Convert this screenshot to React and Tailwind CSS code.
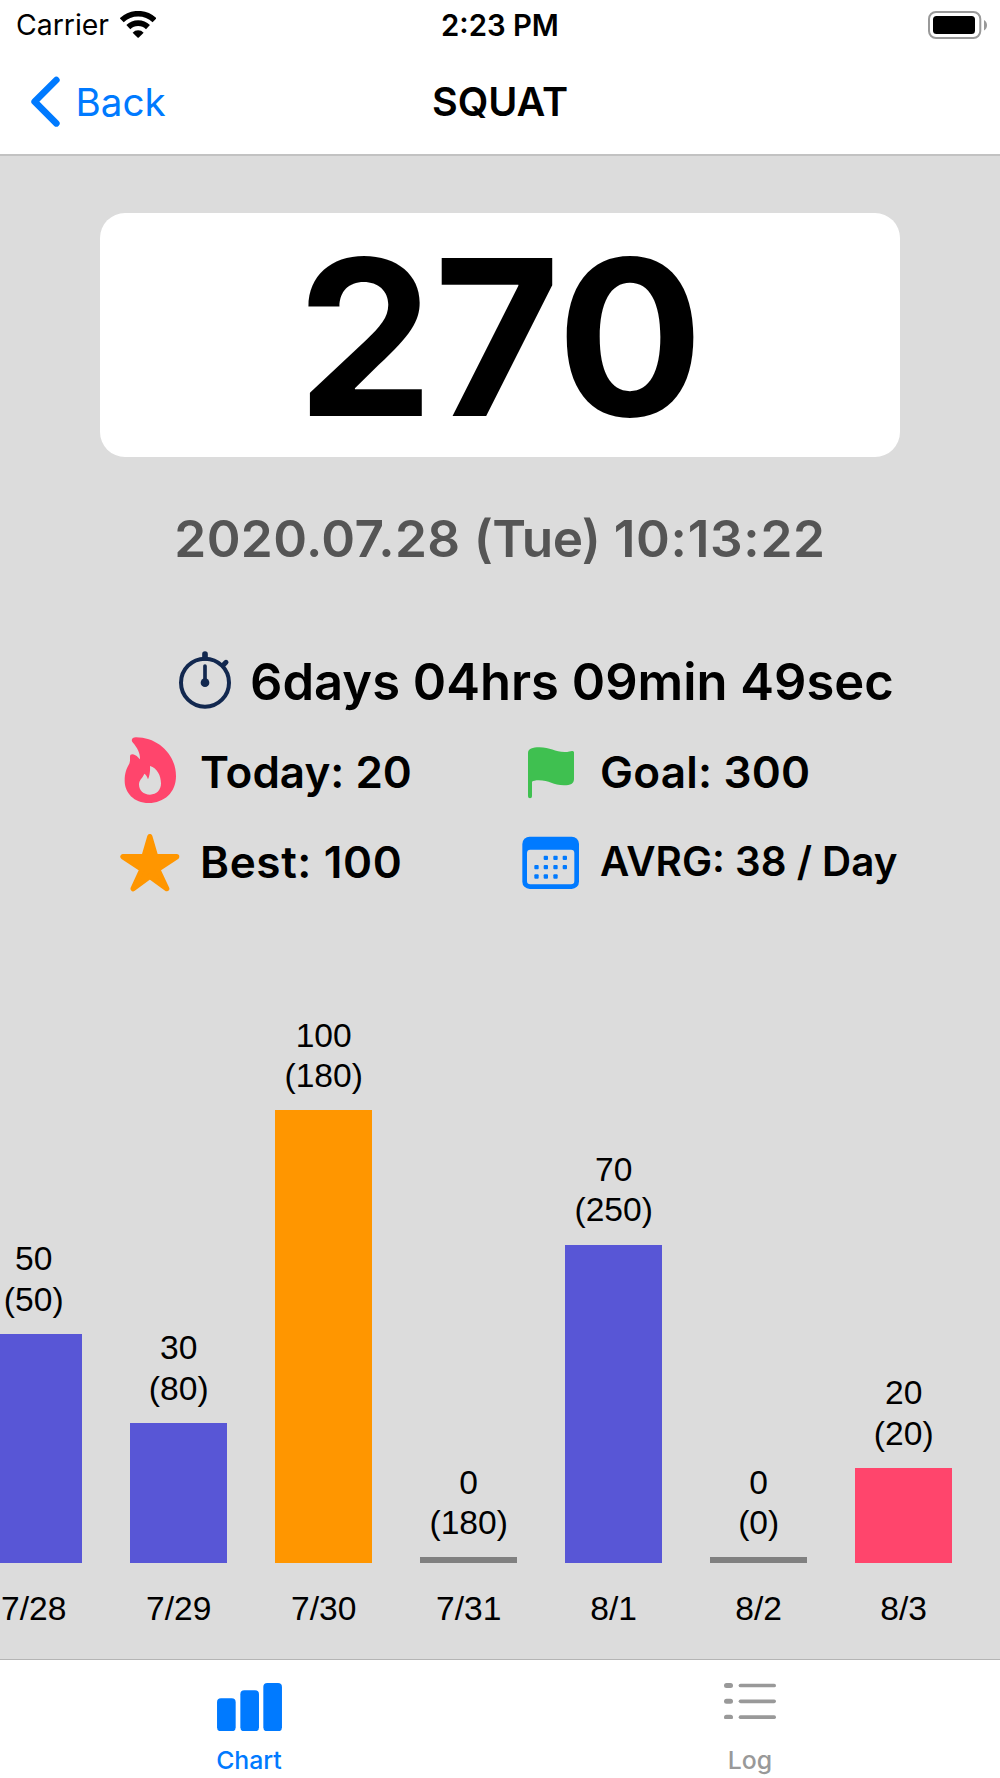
import React from "react";

const days = [
  { date: "7/28", count: 50, total: 50, color: "bg-[#5856d6]" },
  { date: "7/29", count: 30, total: 80, color: "bg-[#5856d6]" },
  { date: "7/30", count: 100, total: 180, color: "bg-[#ff9600]" },
  { date: "7/31", count: 0, total: 180, color: "bg-[#808080]" },
  { date: "8/1", count: 70, total: 250, color: "bg-[#5856d6]" },
  { date: "8/2", count: 0, total: 0, color: "bg-[#808080]" },
  { date: "8/3", count: 20, total: 20, color: "bg-[#ff456c]" },
];

// Even an empty day keeps a thin line
const barHeight = (count) => 5.7 + count * 4.47;

const WifiIcon = () => (
  <svg className="w-[36.3px] h-[27px]" viewBox="0 0 109 81" fill="none">
    <path d="M5.2 28A71 71 0 0 1 103.8 28" stroke="#000" strokeWidth="17" />
    <path d="M25 48.4A42.5 42.5 0 0 1 84 48.4" stroke="#000" strokeWidth="17" />
    <path d="M38 65A23 23 0 0 1 71 65L56.5 79.5Q54.5 81 52.5 79.5Z" fill="#000" />
  </svg>
);

const BatteryIcon = () => (
  <svg className="w-[60px] h-[28px]" viewBox="0 0 60 28">
    <rect x="1" y="1" width="51.3" height="26" rx="7" fill="#fff" stroke="#999" strokeWidth="2" />
    <rect x="5" y="5" width="42" height="18" rx="3.5" fill="#000" />
    <path d="M56 9C60 11 60 17.500 56 19.500Z" fill="#999" />
  </svg>
);

const ChevronIcon = () => (
  <svg className="w-[30px] h-[51px]" viewBox="0 0 90 153" fill="none">
    <path d="M79 12L14 77L79 142" stroke="#007aff" strokeWidth="20" strokeLinecap="round" strokeLinejoin="round" />
  </svg>
);

const StopwatchIcon = () => (
  <svg className="w-[54px] h-[64px]" viewBox="234 60 162 192" fill="none" stroke="#12284f" strokeLinecap="round">
    <circle cx="315" cy="158" r="72" strokeWidth="12" />
    <path d="M315 72V84" strokeWidth="17" />
    <path d="M378 97L370 105" strokeWidth="15" />
    <path d="M315 108V156" strokeWidth="11" />
    <circle cx="315" cy="158" r="13" fill="#12284f" stroke="none" />
  </svg>
);

const FlameIcon = () => (
  <svg className="w-[56px] h-[69.33px]" viewBox="66 321 168 208">
    <path
      fill="#ff456c"
      fillRule="evenodd"
      d="M108 322C175 322 228 375 228 438C228 488 192 519 146 519C102 519 74 488 74 452C74 430 79 417 87 403C91 395 90 388 90 380C90 372 98 371 106 376C112 379 116 384 120 388C121 370 112 353 99 338C91 330 97 322 108 322ZM150 408C172 415 183 437 183 460C183 480 170 494 150 494C130 494 117 481 117 463C117 450 128 444 133 431C139 434 141 440 144 448C149 437 151 423 150 408Z"
    />
  </svg>
);

const StarIcon = () => (
  <svg className="w-[64px] h-[60px]" viewBox="54 606 192 180">
    <path
      fill="#ff9600"
      stroke="#ff9600"
      strokeWidth="16"
      strokeLinejoin="round"
      d="M149.500 620L167 680H230L173 718L200 776L149.500 739L99.500 776L126 718L69 680H132Z"
    />
  </svg>
);

const FlagIcon = () => (
  <svg className="w-[50px] h-[54px]" viewBox="75 344 150 162">
    <path
      fill="#3fc050"
      d="M84 368C84 356 98 351 118 351C150 351 165 365 194 365C205 365 212 363 216 362C220 361 222 364 222 367V446C222 460 212 465 192 465C160 465 148 450 116 450C106 450 100 452 96 454V498A6 6 0 0 1 84 498Z"
    />
  </svg>
);

const dots = [
  [131, 677], [160, 677], [188, 677],
  [103, 705], [131, 705], [160, 705], [188, 705],
  [103, 733], [131, 733], [160, 733],
];

const CalendarIcon = () => (
  <svg className="w-[60px] h-[54px]" viewBox="60 615 180 162" fill="#007aff">
    <rect x="67" y="620" width="170" height="157" rx="22" />
    <rect x="81" y="659" width="142" height="104" rx="10" fill="#dcdcdc" />
    {dots.map(([x, y]) => (
      <rect key={`${x}-${y}`} x={x} y={y} width="13" height="13" rx="3" />
    ))}
  </svg>
);

const ChartIcon = () => (
  <svg className="w-[65px] h-[48.3px]" viewBox="0 0 195 145" fill="#007aff">
    <rect x="0" y="46" width="56" height="99" rx="12" />
    <rect x="70" y="22" width="56" height="123" rx="12" />
    <rect x="139" y="0" width="56" height="145" rx="12" />
  </svg>
);

const ListIcon = () => (
  <svg className="w-[52px] h-[36.7px]" viewBox="0 0 156 110" fill="#999">
    {[0, 47.5, 95].map((y) => (
      <g key={y}>
        <rect x="0" y={y} width="27" height="15" rx="7.5" />
        <rect x="44" y={y + 2} width="112" height="11" rx="5.5" />
      </g>
    ))}
  </svg>
);

const Stat = ({ icon, className, children }) => (
  <div className="flex h-[90px] items-center">
    <div className="flex w-[100px] shrink-0 justify-center">{icon}</div>
    <span className={`whitespace-nowrap font-semibold ${className}`}>{children}</span>
  </div>
);

const Bar = ({ day }) => (
  <div className="flex w-[145px] shrink-0 flex-col items-center text-[33.6px] leading-[40.4px]">
    <span>{day.count}</span>
    <span>({day.total})</span>
    <div className={`mt-[14px] w-[96.7px] ${day.color}`} style={{ height: barHeight(day.count) }}></div>
    <span className="mt-[26px]">{day.date}</span>
  </div>
);

const App = () => {
  return (
    <div className="flex h-[1778px] w-[1000px] flex-col overflow-hidden bg-[#dcdcdc] font-[Inter,sans-serif] text-black">
      <header className="h-[156px] shrink-0 border-b-2 border-[#c2c2c2] bg-white">
        <div className="grid h-[50px] grid-cols-3 items-center pl-4 pr-[12px] text-[28.4px]">
          <div className="flex items-center gap-[11px]">
            <span className="pt-px">Carrier</span>
            <WifiIcon />
          </div>
          <span className="pr-1 pt-px text-center text-[29.3px] font-semibold">2:23 PM</span>
          <div className="flex justify-end">
            <BatteryIcon />
          </div>
        </div>
        <div className="grid h-[104px] grid-cols-3 items-center px-[30px]">
          <button className="flex items-center gap-[15.5px] text-[38.6px] text-[#007aff]">
            <ChevronIcon />
            <span className="pt-px">Back</span>
          </button>
          <h1 className="pt-[2px] text-center text-[39.6px] font-semibold">SQUAT</h1>
        </div>
      </header>

      <main className="flex grow flex-col">
        <div className="mx-[100px] mt-[57.3px] flex h-[244px] items-center justify-center rounded-[25px] bg-white pt-[2px] text-[217.4px] font-bold leading-none">
          270
        </div>
        <p className="h-[163px] text-center text-[51.3px] font-semibold leading-[163px] tracking-[0.4px] text-[#555]">
          2020.07.28 <span className="tracking-[-0.6px]">(Tue)</span> <span className="tracking-[0.7px]">10:13:22</span>
        </p>

        <section className="mt-[16.7px] px-[100px]">
          <div className="flex h-[90px] items-center pl-[60px]">
            <div className="flex w-[90px] justify-center">
              <StopwatchIcon />
            </div>
            <span className="whitespace-nowrap pt-px text-[50.7px] font-semibold">6days 04hrs 09min 49sec</span>
          </div>
          <div className="grid grid-cols-2">
            <Stat icon={<FlameIcon />} className="text-[44px]">Today: 20</Stat>
            <Stat icon={<FlagIcon />} className="text-[44.1px] tracking-[0.2px]">Goal: 300</Stat>
            <Stat icon={<StarIcon />} className="text-[44.1px] tracking-[0.6px]">Best: 100</Stat>
            <Stat icon={<CalendarIcon />} className="pt-px text-[40.3px]">AVRG: 38 / Day</Stat>
          </div>
        </section>

        <section className="-ml-[38.8px] flex grow items-end pb-[29px] font-['Liberation_Sans',sans-serif]">
          {days.map((day) => (
            <Bar key={day.date} day={day} />
          ))}
        </section>
      </main>

      <nav className="grid h-[119.5px] shrink-0 grid-cols-2 border-t-[1.500px] border-[#b5b5b5] bg-white text-[24.8px] font-medium leading-[30px]">
        <button className="flex flex-col items-center justify-between pb-[3.5px] pr-[2px] pt-[23px] text-[#007aff]">
          <ChartIcon />
          <span>Chart</span>
        </button>
        <button className="flex flex-col items-center justify-between pb-[3.5px] pt-[23px] text-[#999]">
          <ListIcon />
          <span>Log</span>
        </button>
      </nav>
    </div>
  );
};

export default App;
